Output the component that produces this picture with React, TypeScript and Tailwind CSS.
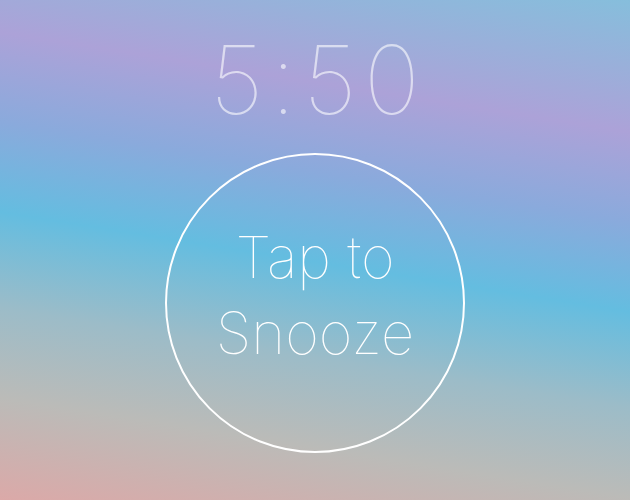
export default function App() {
  return (
    <div
      className="flex h-[500px] w-full flex-col items-center overflow-hidden bg-[linear-gradient(189deg,#86bedc_0%,#aca2d8_22%,#8aaadc_37%,#64bde0_52%,#9cbcc8_68%,#bbbbb8_83%,#dba9a8_100%)]"
      style={{ fontFamily: 'Inter, "Noto Sans", sans-serif' }}
    >
      <div className="mt-[32px] pl-[7px] text-[95px] font-thin leading-none tracking-[7px] text-white/60">
        5:50
      </div>
      <button
        type="button"
        className="mt-[26px] flex h-[300px] w-[300px] flex-col items-center justify-center rounded-full border-2 border-white pb-[16px] text-[58px] font-thin leading-[76px] text-white"
      >
        <span>Tap to</span>
        <span>Snooze</span>
      </button>
    </div>
  );
}
